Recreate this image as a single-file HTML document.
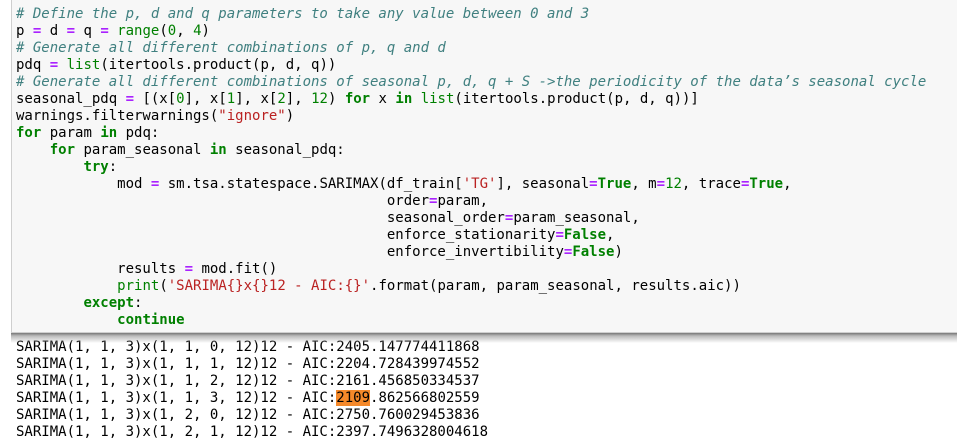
<!DOCTYPE html>
<html><head><meta charset="utf-8"><style>
body{margin:0;width:957px;height:442px;background:#fff;overflow:hidden;position:relative;font-family:"DejaVu Sans Mono","Liberation Mono",monospace;font-size:14px;}
pre{margin:0;font-family:inherit;font-size:14px;line-height:17px;white-space:pre;}
.cell{position:absolute;left:11px;top:-2px;width:960px;height:335px;background:#f7f7f7;border:1px solid #cfcfcf;box-sizing:border-box;}
.cell pre{position:absolute;left:4px;top:7px;color:#000;}
.shadow{position:absolute;left:11px;top:333px;width:946px;height:10px;background:linear-gradient(#777,#bbb 30%,rgba(255,255,255,0));}
.out{position:absolute;left:16px;top:339px;}
.c{color:#408080;font-style:italic}.k{color:#008000;font-weight:bold}.o{color:#AA22FF;font-weight:bold}.n{color:#008000}.s{color:#BA2121}.b{color:#008000}
.hl{background:#f5892a}
</style></head><body>
<div class="out"><pre>SARIMA(1, 1, 3)x(1, 1, 0, 12)12 - AIC:2405.147774411868
SARIMA(1, 1, 3)x(1, 1, 1, 12)12 - AIC:2204.728439974552
SARIMA(1, 1, 3)x(1, 1, 2, 12)12 - AIC:2161.456850334537
SARIMA(1, 1, 3)x(1, 1, 3, 12)12 - AIC:<span class="hl">2109</span>.862566802559
SARIMA(1, 1, 3)x(1, 2, 0, 12)12 - AIC:2750.760029453836
SARIMA(1, 1, 3)x(1, 2, 1, 12)12 - AIC:2397.7496328004618</pre></div>
<div class="shadow"></div>
<div class="cell"><pre><span class="c"># Define the p, d and q parameters to take any value between 0 and 3</span>
p <span class="o">=</span> d <span class="o">=</span> q <span class="o">=</span> <span class="b">range</span>(<span class="n">0</span>, <span class="n">4</span>)
<span class="c"># Generate all different combinations of p, q and d</span>
pdq <span class="o">=</span> <span class="b">list</span>(itertools.product(p, d, q))
<span class="c"># Generate all different combinations of seasonal p, d, q + S -&gt;the periodicity of the data’s seasonal cycle</span>
seasonal_pdq <span class="o">=</span> [(x[<span class="n">0</span>], x[<span class="n">1</span>], x[<span class="n">2</span>], <span class="n">12</span>) <span class="k">for</span> x <span class="k">in</span> <span class="b">list</span>(itertools.product(p, d, q))]
warnings.filterwarnings(<span class="s">"ignore"</span>)
<span class="k">for</span> param <span class="k">in</span> pdq:
    <span class="k">for</span> param_seasonal <span class="k">in</span> seasonal_pdq:
        <span class="k">try</span>:
            mod <span class="o">=</span> sm.tsa.statespace.SARIMAX(df_train[<span class="s">'TG'</span>], seasonal<span class="o">=</span><span class="k">True</span>, m<span class="o">=</span><span class="n">12</span>, trace<span class="o">=</span><span class="k">True</span>,
                                            order<span class="o">=</span>param,
                                            seasonal_order<span class="o">=</span>param_seasonal,
                                            enforce_stationarity<span class="o">=</span><span class="k">False</span>,
                                            enforce_invertibility<span class="o">=</span><span class="k">False</span>)
            results <span class="o">=</span> mod.fit()
            <span class="b">print</span>(<span class="s">'SARIMA{}x{}12 - AIC:{}'</span>.format(param, param_seasonal, results.aic))
        <span class="k">except</span>:
            <span class="k">continue</span></pre></div>
</body></html>
